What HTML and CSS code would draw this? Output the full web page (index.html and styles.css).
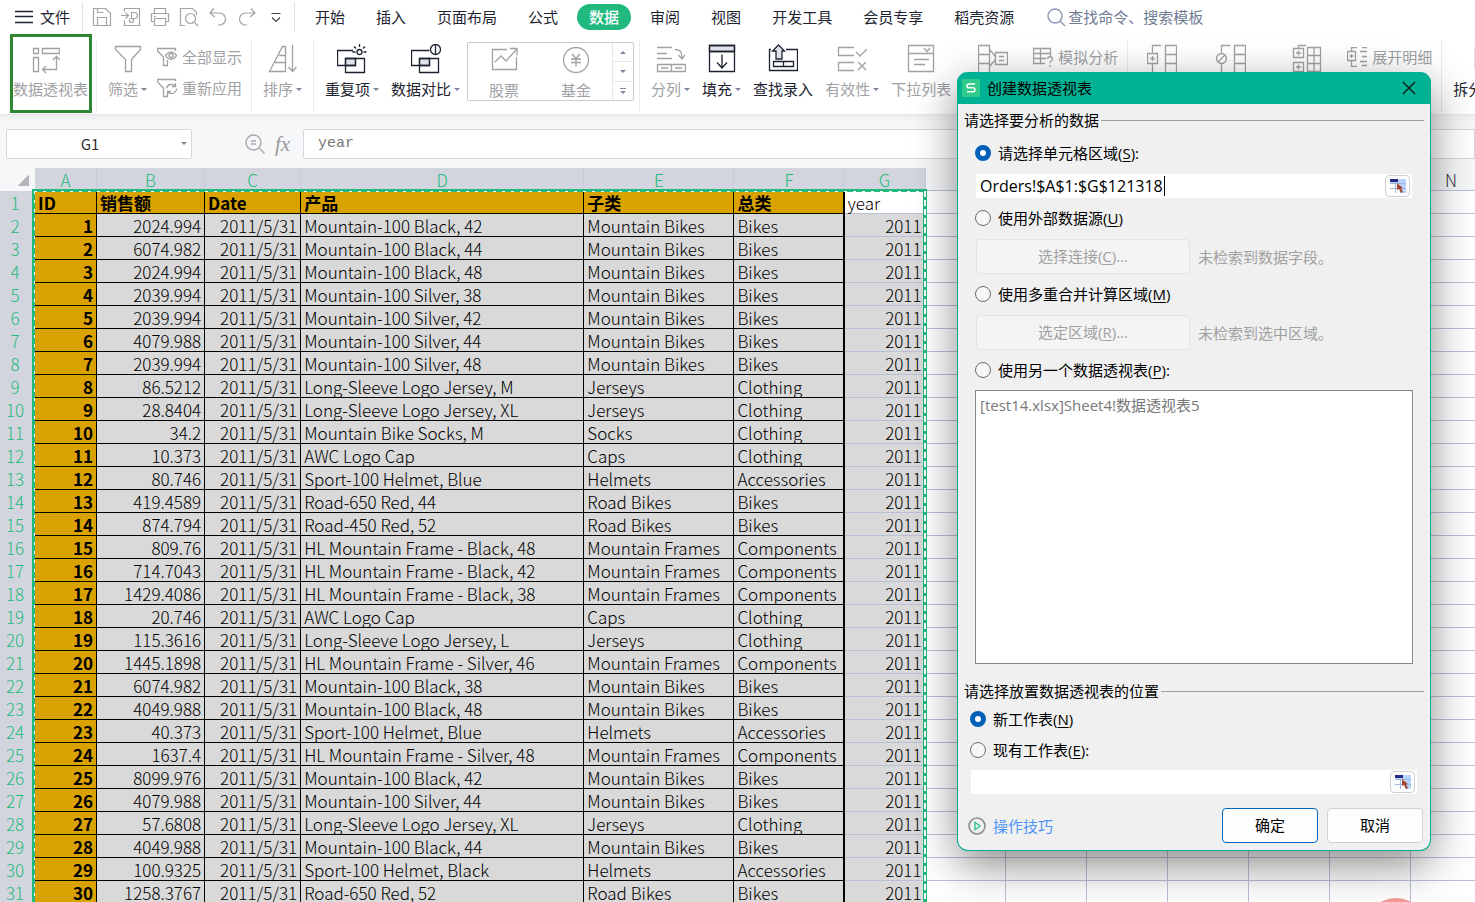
FILE: index.html
```html
<!DOCTYPE html>
<html lang="zh-CN">
<head>
<meta charset="utf-8">
<title>创建数据透视表</title>
<link rel="stylesheet" href="styles.css">
</head>
<body>
<div class="app">
  <header class="menu">
    <button class="file"><svg width="18" height="14" viewBox="0 0 18 14"><path d="M0 1.500h18M0 6.500h18M0 12.500h18"/></svg>文件</button>
    <span class="rule"></span>
    <div class="quick">
      <button aria-label="保存"><svg width="20" height="20" viewBox="0 0 20 20"><path d="M1.500 1.500h12l5 5v12h-17zM5.500 18.500v-8h9v8M5.500 1.500v4h6"/></svg></button>
      <button aria-label="输出为PDF"><svg width="20" height="20" viewBox="0 0 20 20"><path d="M3.500 4.500v-3h15v17h-15v-5M0 8.500h7M4.500 5.500l3 3-3 3M10.500 12v-6.500h3a3 3 0 0 1 0 6h-3a2 2 0 1 0 2 2v-2"/></svg></button>
      <button aria-label="打印"><svg width="20" height="20" viewBox="0 0 20 20"><path d="M4.500 6V1.500h11V6M4.500 14.500h-3v-8h17v8h-3M4.500 11.500h11v7h-11zM4 9.500h2"/></svg></button>
      <button aria-label="打印预览"><svg width="20" height="20" viewBox="0 0 20 20"><path d="M6 18.500H1.500v-17h12l4 4V8M15.500 15.500l3.500 3.500"/><circle cx="11.500" cy="11.500" r="5"/></svg></button>
      <button aria-label="撤销"><svg width="20" height="20" viewBox="0 0 20 20"><path d="M6 1.500l-4 4.500 5 4M2.500 6h9a6 6 0 0 1 0 12H10"/></svg></button>
      <button aria-label="恢复"><svg width="20" height="20" viewBox="0 0 20 20"><path d="M14 1.500l4 4.500-5 4M17.500 6h-9a6 6 0 0 0 0 12H10"/></svg></button>
      <button aria-label="更多" class="more"><svg width="20" height="20" viewBox="0 0 20 20"><path d="M5.500 6.500h9M6 10.500l4 4 4-4"/></svg></button>
    </div>
    <span class="rule"></span>
    <nav class="tabs">
      <button>开始</button><button>插入</button><button>页面布局</button><button>公式</button><button class="on">数据</button><button>审阅</button><button>视图</button><button>开发工具</button><button>会员专享</button><button>稻壳资源</button>
    </nav>
    <button class="search"><svg width="19" height="19" viewBox="0 0 19 19"><circle cx="8" cy="8" r="7"/><path d="M13 13l5 5"/></svg>查找命令、搜索模板</button>
  </header>

  <div class="ribbon">
    <button class="tool dim pivot"><svg width="30" height="30" viewBox="0 0 30 30"><path d="M3.500 3.500h5v5h-5zM12.500 3.500h17v5h-17zM3.500 12.500h5v14h-5zM26.500 12v12.500h-14M23 15l3.500-3.500L30 15M16 21l-3.500 3.500L16 28"/></svg><span>数据透视表</span></button>
    <i class="sep first"></i>
    <button class="tool dim"><svg width="30" height="30" viewBox="0 0 30 30"><path d="M2.500 2.500h25v3l-9 10v12h-6v-12l-10-10z"/></svg><span class="dd">筛选</span></button>
    <div class="pair dim">
      <button><svg width="20" height="20" viewBox="0 0 20 20"><path d="M18.500 4V1.500H.5V4l6 6v8.500h4V13"/><path d="M8.500 8.500c3-4.500 8-4.500 11 0-3 5-8 5-11 0z"/><circle cx="14" cy="8.500" r="2"/></svg>全部显示</button>
      <button><svg width="20" height="20" viewBox="0 0 20 20"><path d="M18.500 3V1.500H.5V4l6 6v8.500h4V16M9.500 10.500a5 5 0 0 1 9-2M18.500 5v3.500H15M19.500 10.500a5 5 0 0 1-9 3M10.500 17v-3.500H14"/></svg>重新应用</button>
    </div>
    <i class="sep"></i>
    <button class="tool dim"><svg width="30" height="30" viewBox="0 0 30 30"><path d="M17.500 27.500h-16l13-25h3zM7 18.500h10.500M11 11.500h6.500M24.500 1v26M20.500 23l4 4.500 4-4.500"/></svg><span class="dd">排序</span></button>
    <i class="sep"></i>
    <button class="tool"><svg width="30" height="30" viewBox="0 0 30 30"><path class="fill" d="M8.500 14.500h10v7h-10z"/><path d="M16 6.500H.5v15h18v-8M8.500 14.500h19v14h-19zM22.500 0v3M17 2.500l2 2M28 2.500l-2 2M15.500 8h3M26.500 8h3"/><circle cx="22.500" cy="8" r="2.500"/></svg><span class="dd">重复项</span></button>
    <button class="tool"><svg width="30" height="30" viewBox="0 0 30 30"><path class="fill" d="M8.500 14.500h10v7h-10z"/><path d="M18.500 6.500H.5v15h18v-8M8.500 14.500h19v14h-19zM24.500 0v11"/><circle cx="24.500" cy="5.500" r="5"/></svg><span class="dd">数据对比</span></button>
    <div class="gallery dim">
      <button class="tool"><svg width="30" height="30" viewBox="0 0 30 30"><path d="M18 3.500H3.500v20h24V11M6 16l6-6 5 5L28 3M21 2.500h7v7"/></svg><span>股票</span></button>
      <button class="tool"><svg width="30" height="30" viewBox="0 0 30 30"><circle cx="15" cy="14" r="12.500"/><path d="M11 8l4 4.500 4-4.500M10 13h10M10 16.500h10M15 12.500v8"/></svg><span>基金</span></button>
      <div class="steps"><button aria-label="上一行"><i class="up"></i></button><button aria-label="下一行"><i class="down"></i></button><button aria-label="展开"><i class="bar"></i><i class="down"></i></button></div>
    </div>
    <i class="sep"></i>
    <button class="tool dim"><svg width="30" height="30" viewBox="0 0 30 30"><path d="M1 3.500h15M1 9.500h10M1 14.500h15M19 5.500c6 0 7 3 7 9M22.500 11l3.500 4 3-4M1.500 20.500h28v7h-28zM15.500 20.500v7M5 24h7M19 24h7"/></svg><span class="dd">分列</span></button>
    <button class="tool"><svg width="30" height="30" viewBox="0 0 30 30"><path class="fill" d="M2.500 1.500h25v6h-25z"/><path d="M2.500 1.500h25v26h-25zM2.500 7.500h25M15 10.500v13M10 18.500l5 5.500 5-5.500"/></svg><span class="dd">填充</span></button>
    <button class="tool"><svg width="30" height="30" viewBox="0 0 30 30"><path class="fill" d="M10.500 1l6 6H14v8H8V7H4.500z"/><path d="M3 5.500H1.500v21h28v-21H18M5.500 17.500h20v5h-20zM15.500 17.500v5"/></svg><span>查找录入</span></button>
    <button class="tool dim"><svg width="30" height="30" viewBox="0 0 30 30"><path d="M17 3.500H1.500v8H17M19 8l4 4 7-7M17 18.500H1.500v8H17M21 18l8 8M29 18l-8 8"/></svg><span class="dd">有效性</span></button>
    <button class="tool dim"><svg width="30" height="30" viewBox="0 0 30 30"><path d="M2.500 1.500h25v26h-25zM2.500 9.500h25M18 4l3 3.500L24 4M8 15.500h15M8 20.500h11"/></svg><span>下拉列表</span></button>
    <button class="tool dim"><svg width="30" height="30" viewBox="0 0 30 30"><path d="M.5 1.500h11v28H.5zM.5 10.500h11M.5 19.500h11M12 6l5 6M12 22l5-6M17.500 8.500h12v12h-12zM21 12.500h5M21 16.500h5"/></svg><span>合并计算</span></button>
    <div class="pair dim"><button><svg width="20" height="20" viewBox="0 0 20 20"><path d="M12 16.500H.5v-15h17V9M.5 6.500h17M.5 11.500H13M7.500 1.500v15M14.500 12c0-3 5-3 5 0 0 2-2.500 2-2.500 4M17 18v2"/></svg>模拟分析</button></div>
    <i class="sep"></i>
    <button class="tool dim"><svg width="30" height="30" viewBox="0 0 30 30"><path d="M14 1.500H5.500v7M.5 9.500h10v10H.5zM3 14.500h5M5.500 12v5M5.500 20v9M18.500 29V1.500h11V29M18.500 10.500h11M18.500 19.500h11"/></svg><span>创建组</span></button>
    <button class="tool dim"><svg width="30" height="30" viewBox="0 0 30 30"><path d="M14 1.500H5.500v7M2 18l7-7M5.500 20v9M18.500 29V1.500h11V29M18.500 10.500h11M18.500 19.500h11"/><circle cx="5.500" cy="14.500" r="5"/></svg><span class="dd">取消组合</span></button>
    <button class="tool dim"><svg width="30" height="30" viewBox="0 0 30 30"><path d="M14 1.500H6.500v3M1.500 4.500h10v9h-10zM4 9h5M6.500 6.500v5M1.500 18.500h10v9h-10zM4 23h5M6.500 20.500v5M15.500 3.500h13v24h-13zM22 3.500v24M15.500 11.500h13M15.500 19.500h13"/></svg><span>分类汇总</span></button>
    <div class="pair dim"><button><svg width="20" height="20" viewBox="0 0 20 20"><path d="M10 .5H4.500v4M.5 4.500h8v9h-8zM2.500 9h4M4.500 7v4M4.500 14v5.500H10M15 .5h5M13 4.500h7M15 9.500h5M13 14.500h7M15 18.500h5"/></svg>展开明细</button></div>
    <i class="sep"></i>
    <button class="tool"><svg width="30" height="30" viewBox="0 0 30 30"><path d="M2.500 3.500h25v22h-25zM2.500 11.500h25M2.500 18.500h25M11 3.500v22"/></svg><span class="dd">拆分表格</span></button>
  </div>

  <div class="formula">
    <div class="namebox"><input aria-label="名称框" value="G1"><i class="down"></i></div>
    <svg class="lens" width="20" height="20" viewBox="0 0 20 20"><circle cx="8.500" cy="8.500" r="7.500"/><path d="M14 14l5.500 5.500M6 7h5M6 10h5"/></svg>
    <span class="fx">fx</span>
    <input class="bar-input" aria-label="编辑栏" value="year">
  </div>

  <main class="sheet">
    <table class="grid">
      <colgroup><col class="w-num"><col class="w-a"><col class="w-b"><col class="w-c"><col class="w-d"><col class="w-e"><col class="w-f"><col class="w-x w-g"><col class="w-h"><col class="w-x"><col class="w-x"><col class="w-x"><col class="w-x"><col class="w-x"><col class="w-x"></colgroup>
      <thead><tr><th class="corner"></th><th>A</th><th>B</th><th>C</th><th>D</th><th>E</th><th>F</th><th>G</th><th class="off">H</th><th class="off">I</th><th class="off">J</th><th class="off">K</th><th class="off">L</th><th class="off">M</th><th class="off">N</th></tr></thead>
      <tbody id="rows"></tbody>
    </table>
    <div class="ants"></div>
  </main>
  <div class="bubble"></div>

  <form class="dialog" onsubmit="return false">
    <div class="title">
      <svg width="18" height="18" viewBox="0 0 18 18"><rect width="18" height="18" rx="1" fill="#2fc98a"/><path d="M13 5H7C4.500 5 4.500 8.800 7 8.800h4c2.500 0 2.500 4 0 4H5" fill="none" stroke="#fff" stroke-width="1.600"/></svg>
      <h1>创建数据透视表</h1>
      <button type="button" aria-label="关闭"><svg width="14" height="14" viewBox="0 0 14 14"><path d="M1 1l12 12M13 1L1 13" stroke="#111" stroke-width="1.300"/></svg></button>
    </div>
    <div class="legend">请选择要分析的数据</div>
    <div class="group source">
      <label class="r34"><input type="radio" name="src" checked><span>请选择单元格区域(<u>S</u>):</span></label>
      <div class="field"><input aria-label="单元格区域" value="Orders!$A$1:$G$121318"><i class="cursor"></i><button type="button" aria-label="选取区域"><svg width="16" height="14" viewBox="0 0 16 14"><rect x="1" width="15" height="14" fill="#b8d4fb"/><path fill="#fff" d="M0 4h10v10H0z"/><path fill="#252a86" d="M0 0h8v3H0z"/><path stroke="#9db7df" fill="none" d="M0 4.500h16M0 9.500h16M5.500 4v10"/><path fill="#a24532" d="M7 4l6 5-2 .5 2 3.500-2 1-2-4-2 1z"/></svg></button></div>
      <label class="r40"><input type="radio" name="src"><span>使用外部数据源(<u>U</u>)</span></label>
      <div class="pick"><button type="button" disabled>选择连接(<u>C</u>)...</button><span>未检索到数据字段。</span></div>
      <label class="r40"><input type="radio" name="src"><span>使用多重合并计算区域(<u>M</u>)</span></label>
      <div class="pick"><button type="button" disabled>选定区域(<u>R</u>)...</button><span>未检索到选中区域。</span></div>
      <label class="r40"><input type="radio" name="src"><span>使用另一个数据透视表(<u>P</u>):</span></label>
      <div class="list">[test14.xlsx]Sheet4!数据透视表5</div>
    </div>
    <div class="legend second">请选择放置数据透视表的位置</div>
    <div class="group target">
      <label class="r24"><input type="radio" name="dst" checked><span>新工作表(<u>N</u>)</span></label>
      <label class="r38"><input type="radio" name="dst"><span>现有工作表(<u>E</u>):</span></label>
      <div class="field low"><input aria-label="目标位置"><button type="button" aria-label="选取位置"><svg width="16" height="14" viewBox="0 0 16 14"><rect x="1" width="15" height="14" fill="#b8d4fb"/><path fill="#fff" d="M0 4h10v10H0z"/><path fill="#252a86" d="M0 0h8v3H0z"/><path stroke="#9db7df" fill="none" d="M0 4.500h16M0 9.500h16M5.500 4v10"/><path fill="#a24532" d="M7 4l6 5-2 .5 2 3.500-2 1-2-4-2 1z"/></svg></button></div>
    </div>
    <div class="foot">
      <a href="#"><svg width="18" height="18" viewBox="0 0 18 18" fill="none"><circle cx="9" cy="9" r="8" stroke="#8e8e8e" stroke-width="1.600"/><path d="M7 5.500v7l5-3.500z" stroke="#3fc793" stroke-width="1.500"/></svg>操作技巧</a>
      <button class="ok">确定</button><button type="button">取消</button>
    </div>
  </form>
</div>
<script src="app.js"></script>
</body>
</html>
```
FILE: styles.css
```css
* { box-sizing: border-box; }
body { margin: 0; background: #fff; font-family: "Noto Sans CJK SC", sans-serif; font-size: 15px; line-height: 20px; color: #1d2330; }
button, input { font: inherit; color: inherit; border: 0; background: none; padding: 0; margin: 0; }
svg { fill: none; stroke: currentColor; flex: none; display: block; }
i { font-style: normal; }
.app { position: relative; height: 100vh; overflow: hidden; display: flex; flex-direction: column; }

.menu { display: flex; align-items: center; height: 34px; flex: none; padding-left: 15px; white-space: nowrap; }
.file { display: flex; align-items: center; gap: 7px; margin-right: 12px; }
.file svg { stroke-width: 1.3; }
.menu .rule { width: 1px; height: 30px; background: #dfe2ea; }
.quick { display: flex; gap: 9px; padding: 0 8px 0 9px; color: #a2a3a6; }
.quick svg { stroke-width: 1.2; }
.quick .more { color: #444; }
.tabs { display: flex; gap: 7px; padding-left: 8px; }
.tabs button { padding: 3px 12px; height: 26px; border-radius: 13px; }
.tabs .on { background: #22b97f; color: #fff; font-weight: 500; }
.search { display: flex; align-items: center; gap: 2px; margin-left: 21px; color: #6f7b94; }
.search svg { color: #8b97b4; stroke-width: 1.4; }

.ribbon { display: flex; gap: 12px; height: 81px; flex: none; padding-left: 10px; overflow: hidden; white-space: nowrap; border-bottom: 1px solid #e4e6ea; }
.ribbon > * { flex: none; }
.tool { display: flex; flex-direction: column; align-items: center; gap: 5px; padding-top: 10px; height: 79px; }
.tool svg, .pair svg { stroke-width: 1.3; }
.dim { color: #a0a1a4; }
.fill { fill: #dfe2e8; }
.pivot { border: 3px solid #2e8532; width: 82px; padding-top: 8px; gap: 4px; align-items: flex-start; overflow: hidden; }
.pivot svg { margin-left: 17px; }
.sep { width: 1px; height: 72px; margin: 6px -1px 0 -1px; background: #e9ebef; }
.sep.first { margin-left: -8px; }
.dd { display: flex; align-items: center; gap: 3px; }
.dd::after, .down { content: ""; border: 3px solid transparent; border-top-color: #7d879c; border-bottom: 0; }
.up { border: 3px solid transparent; border-bottom-color: #7d879c; border-top: 0; }
.pair { display: flex; flex-direction: column; padding-top: 13px; gap: 11px; margin: 0 -2px; }
.pair button { display: flex; align-items: center; gap: 5px; height: 20px; }
.gallery { display: flex; width: 167px; height: 59px; margin: 8px -6px 0 -5px; border: 1px solid #c9cbcf; border-radius: 2px; }
.gallery .tool { height: auto; padding-top: 3px; width: 72px; gap: 4px; }
.steps { flex: 1; border-left: 1px solid #e4e6ea; display: flex; flex-direction: column; }
.steps button { flex: 1; display: flex; flex-direction: column; gap: 2px; align-items: center; justify-content: center; }
.steps button + button { border-top: 1px solid #e4e6ea; }
.bar { width: 6px; height: 1px; background: #7d879c; }

.formula { display: flex; align-items: center; height: 53px; flex: none; padding: 4px 0 0 6px; background: linear-gradient(#eceef0, #f6f7f9 8px); }
.namebox { display: flex; align-items: center; width: 186px; height: 30px; padding-right: 4px; background: #fff; border: 1px solid #d5d7dd; border-radius: 2px; }
.namebox input { flex: 1; min-width: 0; text-align: center; padding-right: 8px; color: #333; }
.lens { margin-left: 53px; color: #a8a9ac; stroke-width: 1.4; }
.fx { width: 20px; margin: 0 8px 0 10px; font: italic 21px/24px "Liberation Serif", serif; color: #999; }
.bar-input { flex: 1; height: 30px; padding-left: 14px; background: #fff; border: 1px solid #d5d7dd; border-radius: 2px 0 0 2px; font-family: "Liberation Mono", monospace; color: #777; }

.sheet { position: relative; flex: 1; min-height: 0; overflow: hidden; }
.grid { table-layout: fixed; width: 1492px; border-collapse: separate; border-spacing: 0; font-size: 17px; font-weight: 300; line-height: 20px; color: #000; }
.w-num { width: 35px; } .w-a { width: 62px; } .w-b { width: 108px; } .w-c { width: 96px; } .w-d { width: 283px; }
.w-e { width: 150px; } .w-f { width: 110px; } .w-x { width: 81px; } .w-h { width: 80px; }
.w-a { background: #d9a200; }
.w-b, .w-c, .w-d, .w-e, .w-f, .w-g { background: #d9d9d9; }
.w-num { background: #d2d5de; }
.grid th, .grid td { height: 23px; padding: 2px 3px 0; white-space: nowrap; border-right: 1px solid #b9c1d6; border-bottom: 1px solid #b9c1d6; text-align: left; }
.grid thead th { background: #d2d5de; border-right-color: #c8ccd8; color: #1fba7d; font-weight: 300; text-align: center; }
.grid thead .off { background: #f6f7f9; color: #333; }
.grid thead .corner { background: linear-gradient(135deg, transparent 50%, #b4b5b8 50%) 17px 6px / 12px 12px no-repeat #f6f7f9; border-color: #f6f7f9; }
.grid tbody th { border-color: #ced2dc; color: #1fba7d; font-weight: 300; text-align: center; padding-right: 7px; }
.grid .k { border-color: #000; }
.grid .n { text-align: right; }
.grid .gold { font-weight: 700; }
.grid .top { background: #d9a200; }
.grid .f { border-right-width: 2px; }
.grid .g { text-align: right; }
.grid .active { background: #fff; text-align: left; }
.ants { position: absolute; left: 32px; top: 21px; width: 895px; bottom: -10px; border: 3px solid #21b97c; border-right-width: 4px; }
.ants::after { content: ""; position: absolute; inset: -1px -3px -1px -1px; background:
  repeating-linear-gradient(90deg, #fff 0 3px, transparent 3px 9px) top / 100% 1px no-repeat,
  repeating-linear-gradient(#fff 0 3px, transparent 3px 9px) left / 1px 100% no-repeat,
  repeating-linear-gradient(#fff 0 6px, transparent 6px 9px) right / 2px 100% no-repeat; }
.bubble { position: absolute; left: 1366px; bottom: -56px; width: 60px; height: 60px; border-radius: 50%; background: #f79c96; }

.dialog { position: absolute; left: 957px; top: 72px; width: 474px; padding-bottom: 7px; background: #f0f0f0; border: 1px solid #00ae91; border-top: 0; border-radius: 11px; box-shadow: 0 14px 44px rgba(0,0,0,.46); color: #000; }
.title { display: flex; align-items: center; gap: 7px; height: 32px; padding: 0 15px 0 5px; background: #00b294; margin: 0 -1px; border-radius: 11px 11px 0 0; }
.title > svg { stroke: none; }
.title h1 { flex: 1; margin: 0; font-size: 15px; line-height: 20px; font-weight: 400; }
.legend { display: flex; align-items: center; gap: 2px; height: 32px; padding: 0 6px 0 6px; }
.legend::after { content: ""; flex: 1; height: 1px; background: #a0a0a0; }
.second { margin-top: 11px; }
.group { display: flex; flex-direction: column; }
.source { padding: 0 17px; }
.target { padding: 0 13px 0 12px; }
.group label { display: flex; align-items: center; gap: 7px; }
.group span, .pick, .list, .field { font-family: "Open Sans", "Noto Sans CJK SC", sans-serif; }
.r24 { height: 24px; } .r34 { height: 34px; } .r38 { height: 38px; } .r40 { height: 40px; }
.group input[type=radio] { appearance: none; width: 16px; height: 16px; border: 1px solid #6e6e6e; border-radius: 50%; background: #f6f6f6; }
.group input[type=radio]:checked { border: 5px solid #005fb8; background: #fff; }
u { text-underline-offset: 2px; }
.field { position: relative; display: flex; align-items: center; height: 24px; margin: 4px 1px 0; padding-right: 2px; background: #fff; font-size: 16px; }
.field.low { margin: 1px 0 0 1px; }
.field input { flex: 1; min-width: 0; height: 24px; padding-left: 4px; outline: 0; }
.field button { display: flex; align-items: center; justify-content: center; width: 25px; height: 22px; border: 1px solid #cfcfcf; border-radius: 4px; background: #fdfdfd; }
.field svg { stroke: none; }
.cursor { position: absolute; left: 188px; top: 2px; width: 1px; height: 20px; background: #000; }
.pick { display: flex; align-items: center; gap: 8px; margin: 1px 1px 0; color: #a0a0a0; }
.pick button { width: 214px; height: 35px; padding-bottom: 2px; border: 1px solid #e3e3e3; border-radius: 4px; background: #f4f4f4; }
.list { height: 274px; padding: 4px; background: #fff; border: 1px solid #828790; color: #787878; }
.foot { display: flex; align-items: center; gap: 9px; margin-top: 14px; padding: 0 7px 0 10px; }
.foot a { flex: 1; display: flex; align-items: center; gap: 7px; color: #4f95f5; text-decoration: none; }
.foot button { width: 96px; height: 35px; padding-bottom: 2px; border: 1px solid #d0d0d0; border-radius: 4px; background: #fdfdfd; }
.foot .ok { border-color: #0067c0; }
```
FILE: app.js
```js
const M = 'Mountain Bikes', F = 'Mountain Frames', R = 'Road Bikes';
const data = [
  ['2024.994', 'Mountain-100 Black, 42', M, 'Bikes'],
  ['6074.982', 'Mountain-100 Black, 44', M, 'Bikes'],
  ['2024.994', 'Mountain-100 Black, 48', M, 'Bikes'],
  ['2039.994', 'Mountain-100 Silver, 38', M, 'Bikes'],
  ['2039.994', 'Mountain-100 Silver, 42', M, 'Bikes'],
  ['4079.988', 'Mountain-100 Silver, 44', M, 'Bikes'],
  ['2039.994', 'Mountain-100 Silver, 48', M, 'Bikes'],
  ['86.5212', 'Long-Sleeve Logo Jersey, M', 'Jerseys', 'Clothing'],
  ['28.8404', 'Long-Sleeve Logo Jersey, XL', 'Jerseys', 'Clothing'],
  ['34.2', 'Mountain Bike Socks, M', 'Socks', 'Clothing'],
  ['10.373', 'AWC Logo Cap', 'Caps', 'Clothing'],
  ['80.746', 'Sport-100 Helmet, Blue', 'Helmets', 'Accessories'],
  ['419.4589', 'Road-650 Red, 44', R, 'Bikes'],
  ['874.794', 'Road-450 Red, 52', R, 'Bikes'],
  ['809.76', 'HL Mountain Frame - Black, 48', F, 'Components'],
  ['714.7043', 'HL Mountain Frame - Black, 42', F, 'Components'],
  ['1429.4086', 'HL Mountain Frame - Black, 38', F, 'Components'],
  ['20.746', 'AWC Logo Cap', 'Caps', 'Clothing'],
  ['115.3616', 'Long-Sleeve Logo Jersey, L', 'Jerseys', 'Clothing'],
  ['1445.1898', 'HL Mountain Frame - Silver, 46', F, 'Components'],
  ['6074.982', 'Mountain-100 Black, 38', M, 'Bikes'],
  ['4049.988', 'Mountain-100 Black, 48', M, 'Bikes'],
  ['40.373', 'Sport-100 Helmet, Blue', 'Helmets', 'Accessories'],
  ['1637.4', 'HL Mountain Frame - Silver, 48', F, 'Components'],
  ['8099.976', 'Mountain-100 Black, 42', M, 'Bikes'],
  ['4079.988', 'Mountain-100 Silver, 44', M, 'Bikes'],
  ['57.6808', 'Long-Sleeve Logo Jersey, XL', 'Jerseys', 'Clothing'],
  ['4049.988', 'Mountain-100 Black, 44', M, 'Bikes'],
  ['100.9325', 'Sport-100 Helmet, Black', 'Helmets', 'Accessories'],
  ['1258.3767', 'Road-650 Red, 52', R, 'Bikes']
];
const blank = '<td></td>'.repeat(7);
const head = '<tr><th>1</th>' + ['ID', '销售额', 'Date', '产品', '子类', '总类']
  .map((t, i) => `<td class="k gold top${i === 5 ? ' f' : ''}">${t}</td>`).join('') +
  `<td class="g active">year</td>${blank}</tr>`;
document.getElementById('rows').innerHTML = head + data.map(([sales, product, sub, cat], i) =>
  `<tr><th>${i + 2}</th><td class="k gold n">${i + 1}</td><td class="k n">${sales}</td><td class="k n">2011/5/31</td>` +
  `<td class="k">${product}</td><td class="k">${sub}</td><td class="k f">${cat}</td><td class="g">2011</td>${blank}</tr>`).join('');
```
